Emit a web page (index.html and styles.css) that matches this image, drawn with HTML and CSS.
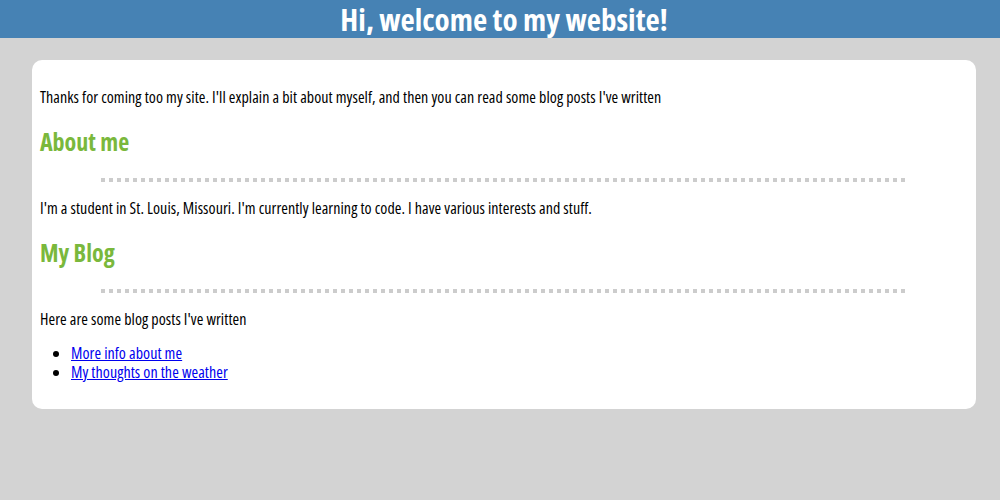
FILE: index.html
```html
<!DOCTYPE html>
<html>
<head>
<meta charset="utf-8">
<title>My website</title>
<link rel="stylesheet" href="styles.css">
</head>
<body>
<header class="site-header">
  <h1 class="site-title">Hi, welcome to my website!</h1>
</header>
<main class="page">
  <div class="card">
    <p class="text">Thanks for coming too my site. I'll explain a bit about myself, and then you can read some blog posts I've written</p>
    <h2 class="section-title">About me</h2>
    <hr class="divider">
    <p class="text">I'm a student in St. Louis, Missouri. I'm currently learning to code. I have various interests and stuff.</p>
    <h2 class="section-title">My Blog</h2>
    <hr class="divider">
    <p class="text">Here are some blog posts I've written</p>
    <ul class="posts">
      <li class="post"><a class="post-link" href="#">More info about me</a></li>
      <li class="post"><a class="post-link" href="#">My thoughts on the weather</a></li>
    </ul>
  </div>
</main>
</body>
</html>
```
FILE: styles.css
```css
html, body {
  margin: 0;
  padding: 0;
}
body {
  background: #d3d3d3;
  font-family: "Open Sans", "Roboto", "Liberation Sans", Arial, sans-serif;
  font-stretch: 75%;
  color: #000;
  font-size: 16px;
}
.site-header {
  background: #4682b4;
  height: 38px;
  display: flex;
  align-items: flex-start;
  justify-content: center;
}
.site-title {
  margin: 0;
  color: #fff;
  font-size: 31px;
  font-weight: bold;
  line-height: 38px;
  padding-left: 8px;
}
.page {
  padding: 22px 24px 0 32px;
}
.card {
  background: #fff;
  border-radius: 10px;
  padding: 12px 8px 11px;
}
.text {
  margin: 16px 0;
  line-height: 18px;
  letter-spacing: 0.07px;
}
.section-title {
  color: #7ab83c;
  font-size: 24px;
  font-weight: bold;
  margin: 22px 0;
  line-height: 28px;
}
.divider {
  border: none;
  height: 4px;
  width: 806px;
  margin: 22px auto 17px;
  background: repeating-linear-gradient(to right, #cccccc 0 4px, transparent 4px 8px);
}
.posts {
  margin: 16px 0;
  padding-left: 31px;
  letter-spacing: 0.07px;
}
.post {
  line-height: 19px;
}
.post-link {
  color: #0000ee;
  text-decoration: underline;
}
```
